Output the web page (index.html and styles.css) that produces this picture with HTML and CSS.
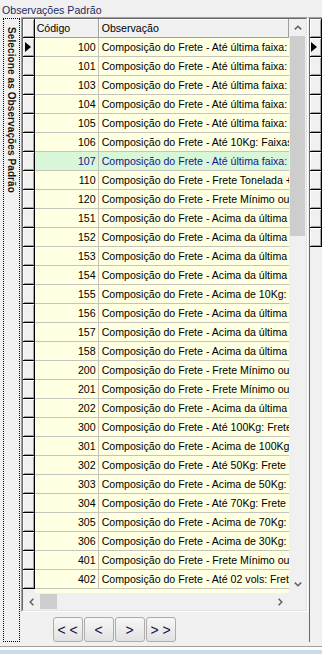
FILE: index.html
```html
<!DOCTYPE html>
<html lang="pt-BR">
<head>
  <meta charset="UTF-8">
  <title>Observações Padrão</title>
  <link rel="stylesheet" href="styles.css">
</head>
<body>
  <div class="caption">Observações Padrão</div>

  <div class="frame">
    <div class="side-tab"><span>Selecione as Observações Padrão</span></div>

    <div class="center">
      <div class="grid">
        <div class="grid-in">
          <div class="table">
            <div class="row head">
              <div class="ind"></div>
              <div class="cell code">Código</div>
              <div class="cell obs">Observação</div>
            </div>
            <div class="row">
              <div class="ind"><span class="arrow"></span></div>
              <div class="cell code">100</div>
              <div class="cell obs">Composição do Frete - Até última faixa: Faixas de peso</div>
            </div>
            <div class="row">
              <div class="ind"></div>
              <div class="cell code">101</div>
              <div class="cell obs">Composição do Frete - Até última faixa: Faixas de peso</div>
            </div>
            <div class="row">
              <div class="ind"></div>
              <div class="cell code">103</div>
              <div class="cell obs">Composição do Frete - Até última faixa: Faixas de peso</div>
            </div>
            <div class="row">
              <div class="ind"></div>
              <div class="cell code">104</div>
              <div class="cell obs">Composição do Frete - Até última faixa: Faixas de peso</div>
            </div>
            <div class="row">
              <div class="ind"></div>
              <div class="cell code">105</div>
              <div class="cell obs">Composição do Frete - Até última faixa: Faixas de peso</div>
            </div>
            <div class="row">
              <div class="ind"></div>
              <div class="cell code">106</div>
              <div class="cell obs">Composição do Frete - Até 10Kg: Faixas de peso</div>
            </div>
            <div class="row current">
              <div class="ind"></div>
              <div class="cell code">107</div>
              <div class="cell obs">Composição do Frete - Até última faixa: Faixas de peso</div>
            </div>
            <div class="row">
              <div class="ind"></div>
              <div class="cell code">110</div>
              <div class="cell obs">Composição do Frete - Frete Tonelada + Ad Valorem</div>
            </div>
            <div class="row">
              <div class="ind"></div>
              <div class="cell code">120</div>
              <div class="cell obs">Composição do Frete - Frete Mínimo ou Frete Peso</div>
            </div>
            <div class="row">
              <div class="ind"></div>
              <div class="cell code">151</div>
              <div class="cell obs">Composição do Frete - Acima da última faixa: Frete Peso</div>
            </div>
            <div class="row">
              <div class="ind"></div>
              <div class="cell code">152</div>
              <div class="cell obs">Composição do Frete - Acima da última faixa: Frete Peso</div>
            </div>
            <div class="row">
              <div class="ind"></div>
              <div class="cell code">153</div>
              <div class="cell obs">Composição do Frete - Acima da última faixa: Frete Peso</div>
            </div>
            <div class="row">
              <div class="ind"></div>
              <div class="cell code">154</div>
              <div class="cell obs">Composição do Frete - Acima da última faixa: Frete Peso</div>
            </div>
            <div class="row">
              <div class="ind"></div>
              <div class="cell code">155</div>
              <div class="cell obs">Composição do Frete - Acima de 10Kg: Frete Peso</div>
            </div>
            <div class="row">
              <div class="ind"></div>
              <div class="cell code">156</div>
              <div class="cell obs">Composição do Frete - Acima da última faixa: Frete Peso</div>
            </div>
            <div class="row">
              <div class="ind"></div>
              <div class="cell code">157</div>
              <div class="cell obs">Composição do Frete - Acima da última faixa: Frete Peso</div>
            </div>
            <div class="row">
              <div class="ind"></div>
              <div class="cell code">158</div>
              <div class="cell obs">Composição do Frete - Acima da última faixa: Frete Peso</div>
            </div>
            <div class="row">
              <div class="ind"></div>
              <div class="cell code">200</div>
              <div class="cell obs">Composição do Frete - Frete Mínimo ou Frete Peso</div>
            </div>
            <div class="row">
              <div class="ind"></div>
              <div class="cell code">201</div>
              <div class="cell obs">Composição do Frete - Frete Mínimo ou Frete Peso</div>
            </div>
            <div class="row">
              <div class="ind"></div>
              <div class="cell code">202</div>
              <div class="cell obs">Composição do Frete - Acima da última faixa: Frete Peso</div>
            </div>
            <div class="row">
              <div class="ind"></div>
              <div class="cell code">300</div>
              <div class="cell obs">Composição do Frete - Até 100Kg: Frete Fixo</div>
            </div>
            <div class="row">
              <div class="ind"></div>
              <div class="cell code">301</div>
              <div class="cell obs">Composição do Frete - Acima de 100Kg: Frete Peso</div>
            </div>
            <div class="row">
              <div class="ind"></div>
              <div class="cell code">302</div>
              <div class="cell obs">Composição do Frete - Até 50Kg: Frete Mínimo</div>
            </div>
            <div class="row">
              <div class="ind"></div>
              <div class="cell code">303</div>
              <div class="cell obs">Composição do Frete - Acima de 50Kg: Frete Peso</div>
            </div>
            <div class="row">
              <div class="ind"></div>
              <div class="cell code">304</div>
              <div class="cell obs">Composição do Frete - Até 70Kg: Frete Mínimo</div>
            </div>
            <div class="row">
              <div class="ind"></div>
              <div class="cell code">305</div>
              <div class="cell obs">Composição do Frete - Acima de 70Kg: Frete Peso</div>
            </div>
            <div class="row">
              <div class="ind"></div>
              <div class="cell code">306</div>
              <div class="cell obs">Composição do Frete - Acima de 30Kg: Frete Peso</div>
            </div>
            <div class="row">
              <div class="ind"></div>
              <div class="cell code">401</div>
              <div class="cell obs">Composição do Frete - Frete Mínimo ou Valor</div>
            </div>
            <div class="row">
              <div class="ind"></div>
              <div class="cell code">402</div>
              <div class="cell obs">Composição do Frete - Até 02 vols: Frete Fixo</div>
            </div>
          </div>

          <div class="vscroll">
            <div class="sb-btn">
              <svg width="8" height="5" viewBox="0 0 8 5"><polyline points="0.8,4.4 4,1.2 7.2,4.4" /></svg>
            </div>
            <div class="thumb-v"></div>
            <div class="track"></div>
            <div class="sb-btn">
              <svg width="8" height="5" viewBox="0 0 8 5"><polyline points="0.8,0.6 4,3.8 7.2,0.6" /></svg>
            </div>
          </div>

          <div class="hscroll">
            <div class="sb-btn">
              <svg width="5" height="8" viewBox="0 0 5 8"><polyline points="4.4,0.8 1.2,4 4.4,7.2" /></svg>
            </div>
            <div class="thumb-h"></div>
            <div class="track"></div>
            <div class="sb-btn">
              <svg width="5" height="8" viewBox="0 0 5 8"><polyline points="0.6,0.8 3.8,4 0.6,7.2" /></svg>
            </div>
          </div>

          <div class="corner"></div>
        </div>
      </div>

      <div class="nav">
        <button>&lt; &lt;</button>
        <button>&lt;</button>
        <button>&gt;</button>
        <button>&gt; &gt;</button>
      </div>
    </div>

    <div class="grid2">
      <div class="grid2-in">
        <div class="ind"></div>
        <div class="ind"><span class="arrow"></span></div>
        <div class="ind"></div>
        <div class="ind"></div>
        <div class="ind"></div>
        <div class="ind"></div>
        <div class="ind"></div>
        <div class="ind"></div>
        <div class="ind"></div>
        <div class="ind"></div>
        <div class="ind"></div>
        <div class="ind"></div>
      </div>
    </div>
  </div>

  <div class="status"></div>
</body>
</html>
```

FILE: styles.css
```css
:root {
  --face: #f0f0f0;
  --info-bk: #ffffe1;
  --shadow: #a0a0a0;
  --dark: #696969;
  --line: #c4c4bc;
  --sel-bk: #d8f6d8;
  --sel-fg: #16168c;
  --caption: #1b2a5e;
}
* { box-sizing:border-box; margin:0; padding:0; }
body {
  width:322px; height:654px; overflow:hidden;
  background:var(--face); color:#000;
  font-family:"Liberation Sans", Arial, sans-serif; font-size:10.6px;
}

/* —— Caption —— */
.caption {
  height:17px; padding:4px 0 0 2px; line-height:13px;
  color:var(--caption);
}

.frame { display:flex; height:629px; }

/* —— Vertical tab —— */
.side-tab {
  width:17px; height:624px; margin:1px 0 0 3px;
  border:1px dotted #000;
  display:flex; justify-content:center; padding-top:8px;
}
.side-tab span {
  writing-mode:vertical-rl;
  font-weight:bold; font-size:10px; line-height:12px; color:#111;
  letter-spacing:0.1px;
}

/* —— Main grid —— */
.center { width:294px; margin-left:1px; }
.grid {
  height:595px;
  border:1px solid; border-color:var(--shadow) #fff #fff var(--shadow);
}
.grid-in {
  height:100%;
  border:1px solid; border-color:var(--dark) #e3e3e3 #e3e3e3 var(--dark);
  display:grid; grid-template-columns:1fr 17px; grid-template-rows:1fr 17px;
}
.table {
  overflow:hidden;
  background:linear-gradient(to right, var(--face) 12px, var(--info-bk) 12px);
}
.row { display:flex; height:19px; }
.ind {
  width:12px; height:19px; flex:none;
  background:var(--face);
  border-right:1px solid #000; border-bottom:1px solid #000;
  box-shadow:inset 1px 1px 0 #fff, inset -1px -1px 0 var(--shadow);
  display:flex; align-items:center; padding-left:2px;
}
.arrow {
  width:0; height:0;
  border-left:6px solid #000;
  border-top:5px solid transparent; border-bottom:5px solid transparent;
}
.cell {
  height:19px; line-height:18px;
  border-bottom:1px solid var(--line); border-right:1px solid var(--line);
  white-space:nowrap; overflow:hidden;
}
.code { width:64px; flex:none; text-align:right; padding-right:2px; }
.obs { flex:1; padding-left:3px; border-right:none; }

.head .cell {
  background:var(--face); text-align:left;
  border-color:var(--shadow);
  box-shadow:inset 1px 1px 0 #fff;
}
.head .code { padding-left:2px; }
.head .obs { border-right:1px solid var(--shadow); }

.current .cell { background:var(--sel-bk); color:var(--sel-fg); }

/* —— Scrollbars —— */
.vscroll, .hscroll { display:flex; background:var(--face); }
.vscroll { flex-direction:column; }
.sb-btn {
  width:17px; height:17px; flex:none;
  display:flex; align-items:center; justify-content:center;
}
.sb-btn svg polyline { fill:none; stroke:#606060; stroke-width:1.5; }
.thumb-v { height:200px; margin:0 1px; background:#cdcdcd; flex:none; }
.thumb-h { width:17px; margin:1px 0; background:#cdcdcd; flex:none; }
.track { flex:1; }
.corner { background:var(--face); }

/* —— Record navigation —— */
.nav { display:flex; gap:1px; margin:5px 0 0 32px; }
.nav button {
  width:30px; height:25px;
  border:1px solid #acacac; border-radius:3px;
  background:linear-gradient(#f6f6f6, #e2e2e2);
  font-family:"Liberation Sans", Arial, sans-serif; font-size:14px;
  color:#101040;
}

/* —— Second grid (cut off) —— */
.grid2 {
  flex:1; height:625px;
  border-top:1px solid var(--shadow); border-left:1px solid var(--face);
}
.grid2-in {
  height:100%;
  border-top:1px solid var(--dark); border-left:1px solid var(--dark);
  background:var(--face);
}
.grid2 .ind { padding-left:1px; }

/* —— Bottom strip —— */
.status {
  height:8px;
  border-top:1px solid var(--shadow);
  background:linear-gradient(#fdfdfd 0 3px, #c9dcef 3px);
}
```
